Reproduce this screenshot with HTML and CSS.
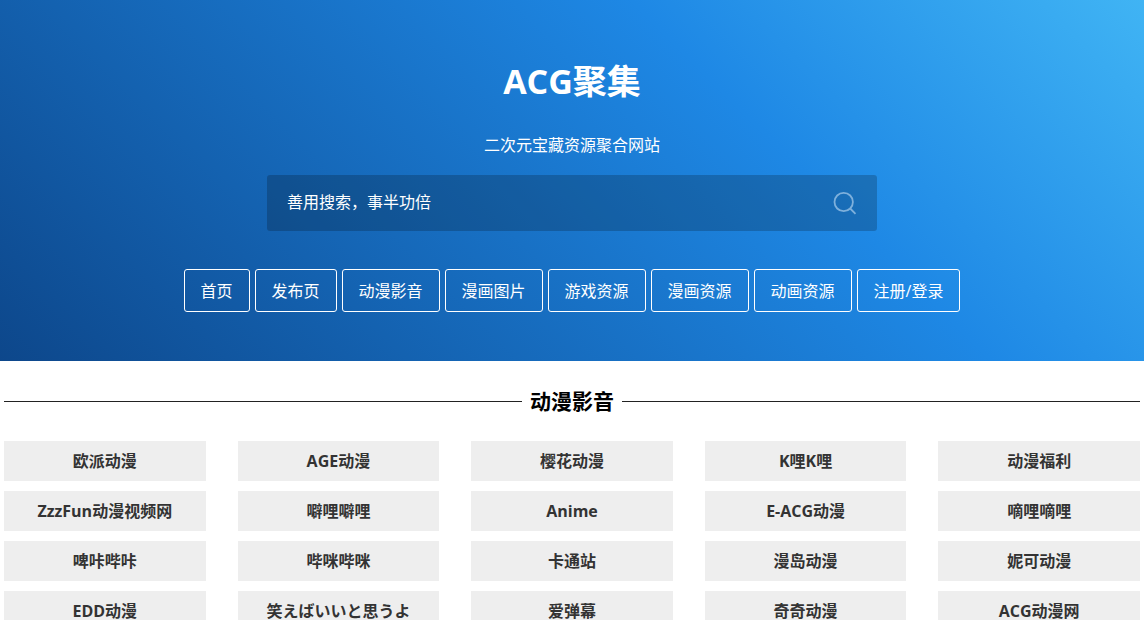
FILE: index.html
```html
<!DOCTYPE html>
<html lang="zh-CN">
<head>
<meta charset="utf-8">
<title>ACG聚集</title>
<link rel="stylesheet" href="styles.css">
</head>
<body>
<header class="hero">
  <h1 class="title">ACG聚集</h1>
  <p class="subtitle">二次元宝藏资源聚合网站</p>
  <form class="search">
    <input class="search-input" type="text" placeholder="善用搜索，事半功倍" aria-label="搜索">
    <button class="search-button" type="button" aria-label="搜索">
      <svg width="24" height="24" viewBox="0 0 24 24" fill="none" stroke="currentColor" stroke-width="1.8"><circle cx="10.7" cy="11" r="9.2"/><path d="M17.2 17.5l5.3 5.3"/></svg>
    </button>
  </form>
  <nav class="nav">
    <a href="#">首页</a>
    <a href="#">发布页</a>
    <a href="#">动漫影音</a>
    <a href="#">漫画图片</a>
    <a href="#">游戏资源</a>
    <a href="#">漫画资源</a>
    <a href="#">动画资源</a>
    <a href="#">注册/登录</a>
  </nav>
</header>
<main class="content">
  <h2 class="section-title">动漫影音</h2>
  <div class="grid">
    <a href="#">欧派动漫</a><a href="#">AGE动漫</a><a href="#">樱花动漫</a><a href="#">K哩K哩</a><a href="#">动漫福利</a>
    <a href="#">ZzzFun动漫视频网</a><a href="#">噼哩噼哩</a><a href="#">Anime</a><a href="#">E-ACG动漫</a><a href="#">嘀哩嘀哩</a>
    <a href="#">啤咔哔咔</a><a href="#">哔咪哔咪</a><a href="#">卡通站</a><a href="#">漫岛动漫</a><a href="#">妮可动漫</a>
    <a href="#">EDD动漫</a><a href="#">笑えばいいと思うよ</a><a href="#">爱弹幕</a><a href="#">奇奇动漫</a><a href="#">ACG动漫网</a>
  </div>
</main>
</body>
</html>
```
FILE: styles.css
```css
* {
  box-sizing: border-box;
}

body {
  margin: 0;
  background: #fff;
  font: 16px/24px "Open Sans", "Noto Sans CJK SC", sans-serif;
  color: #333;
  overflow: hidden;
}

a {
  color: inherit;
  text-decoration: none;
}

.hero {
  display: flex;
  flex-direction: column;
  align-items: center;
  padding: 57px 16px 49px;
  color: #fff;
  background: linear-gradient(45deg, #0d478b 0%, #1e88e5 66%, #40b4f4 100%);
}

.title {
  margin: 0;
  font-size: 34px;
  line-height: 48px;
}

.subtitle {
  margin: 28px 0 18px;
}

.search {
  display: flex;
  align-items: center;
  width: 100%;
  max-width: 610px;
  height: 56px;
  border-radius: 3px;
  background: rgba(0, 0, 0, 0.2);
}

.search-input {
  flex: 1;
  min-width: 0;
  height: 100%;
  padding: 0 20px 2px;
  border: 0;
  outline: 0;
  background: none;
  color: #fff;
  font: inherit;
}

.search-input::placeholder {
  color: #fff;
}

.search-button {
  display: flex;
  padding: 0;
  margin-right: 20px;
  border: 0;
  background: none;
  color: #7eb0dc;
}

.nav {
  display: flex;
  flex-wrap: wrap;
  justify-content: center;
  gap: 5px;
  margin-top: 38px;
}

.nav a {
  padding: 9px 16px 8px;
  border: 1px solid #fff;
  border-radius: 3px;
}

.content {
  padding: 25px 4px 0;
}

.section-title {
  display: flex;
  align-items: center;
  gap: 8px;
  margin: 0;
  font-size: 21px;
  line-height: 30px;
  color: #000;
}

.section-title::before,
.section-title::after {
  content: "";
  flex: 1;
  height: 1px;
  background: #222;
}

.grid {
  display: grid;
  grid-template-columns: repeat(5, 1fr);
  gap: 10px 32px;
  margin-top: 25px;
}

.grid a {
  height: 40px;
  background: #eee;
  font-weight: 700;
  line-height: 40px;
  text-align: center;
  white-space: nowrap;
}
```
